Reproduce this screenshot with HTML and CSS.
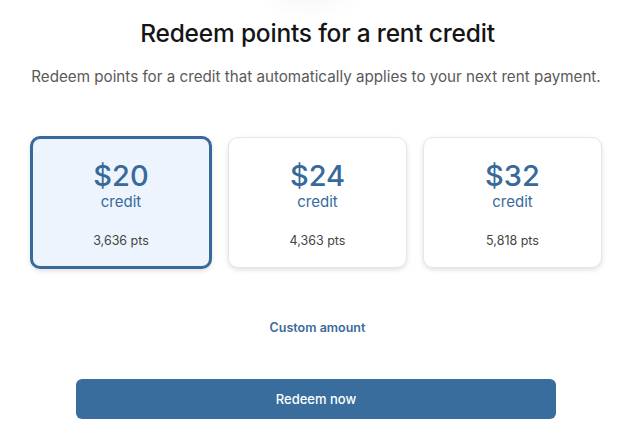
FILE: index.html
```html
<!DOCTYPE html>
<html lang="en">
  <head>
    <meta charset="UTF-8" />
    <meta name="viewport" content="width=device-width, initial-scale=1.0" />
    <title>Redeem points</title>
    <link rel="stylesheet" href="styles.css">
  </head>
  <body>
    <div class="glow"></div>
    <div class="container">
      <h2 class="title">Redeem points for a rent credit</h2>
      <p class="subtitle">Redeem points for a credit that automatically applies to your next rent payment.</p>

      <div class="options">
        <div class="option selected">
          <div class="amount">$20</div>
          <div class="label">credit</div>
          <div class="pts">3,636 pts</div>
        </div>
        <div class="option">
          <div class="amount">$24</div>
          <div class="label">credit</div>
          <div class="pts">4,363 pts</div>
        </div>
        <div class="option">
          <div class="amount">$32</div>
          <div class="label">credit</div>
          <div class="pts">5,818 pts</div>
        </div>
      </div>

      <a class="custom-link" href="#">Custom amount</a>

      <button type="button" class="redeem">Redeem now</button>
    </div>
  </body>
</html>
```

FILE: styles.css
```css
body {
  font-family: Inter, "Noto Sans", Arial, sans-serif;
  margin: 0;
  padding: 0;
  background: #fff;
  color: #222;
  overflow: hidden;
}

.glow {
  position: absolute;
  top: -70px;
  left: 270px;
  width: 80px;
  height: 70px;
  border-radius: 50%;
  box-shadow: 0 0 28px 8px rgba(0, 0, 0, 0.04);
}

.container {
  display: flex;
  flex-direction: column;
  align-items: center;
  padding: 17px 30px 0 33px;
}

.title {
  margin: 0;
  font-size: 24.5px;
  font-weight: 500;
  color: #151515;
  letter-spacing: -0.2px;
  line-height: 32px;
}

.subtitle {
  margin: 18px 0 0;
  font-size: 15.2px;
  color: #5a5a5a;
  line-height: 20px;
  white-space: nowrap;
  margin-left: -3px;
}

.options {
  display: grid;
  grid-template-columns: repeat(3, 1fr);
  gap: 16px;
  width: 100%;
  margin-top: 50px;
}

.option {
  display: flex;
  flex-direction: column;
  align-items: center;
  height: 131px;
  box-sizing: border-box;
  padding-top: 20px;
  background: #fff;
  border: 1px solid #e6e6e8;
  border-radius: 10px;
  box-shadow: 0 2px 5px rgba(0, 0, 0, 0.12);
}

.option.selected {
  background: #edf4fd;
  border: 3px solid #376a9b;
  margin: -1px 0 -1px -3px;
  height: 133px;
  padding-top: 19px;
}

.amount {
  font-size: 29px;
  font-weight: 500;
  color: #376a9b;
  line-height: 36px;
}

.label {
  font-size: 15px;
  color: #376a9b;
  line-height: 20px;
  margin-top: -2px;
}

.pts {
  font-size: 12.5px;
  color: #444;
  margin-top: 21px;
}

.custom-link {
  margin-top: 52px;
  font-size: 12.5px;
  font-weight: 600;
  color: #3a6b9a;
  text-decoration: none;
}

.redeem {
  margin-top: 44px;
  width: 480px;
  height: 40px;
  margin-left: -3px;
  background: #386d9d;
  color: #fff;
  border: none;
  border-radius: 6px;
  font-family: inherit;
  font-size: 13px;
  font-weight: 500;
  cursor: pointer;
}
```
